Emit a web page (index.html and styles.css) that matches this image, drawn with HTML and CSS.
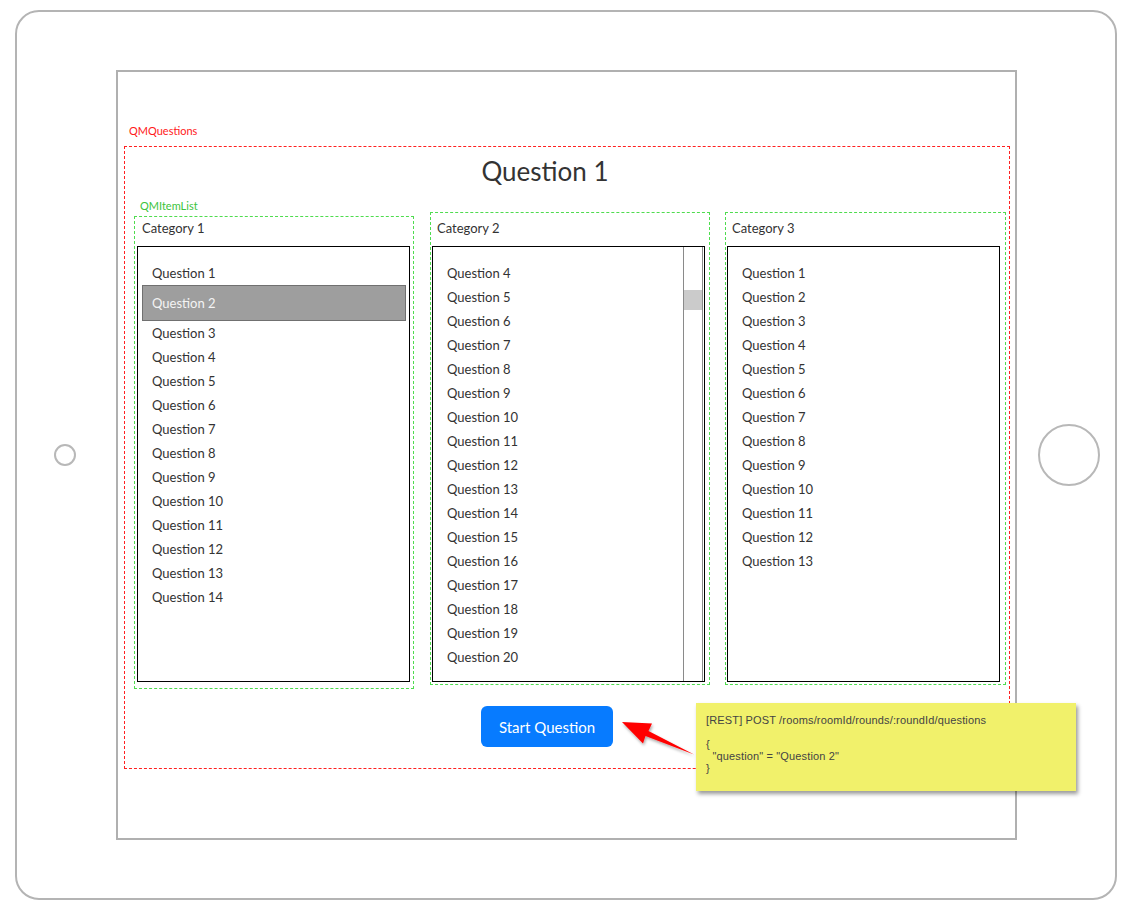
FILE: index.html
```html
<!DOCTYPE html>
<html>
<head>
<meta charset="utf-8">
<link rel="stylesheet" href="styles.css">
</head>
<body>
<div class="device">
  <div class="btn-small"></div>
  <div class="screen">
    <div class="annot annot-red">QMQuestions</div>
    <div class="qm-box">
      <h1 class="title">Question 1</h1>
      <div class="cols">
        <div class="col col-1">
          <div class="annot annot-green">QMItemList</div>
          <div class="cat">Category 1</div>
          <div class="list">
            <ul class="items">
              <li>Question 1</li>
              <li class="sel">Question 2</li>
              <li>Question 3</li>
              <li>Question 4</li>
              <li>Question 5</li>
              <li>Question 6</li>
              <li>Question 7</li>
              <li>Question 8</li>
              <li>Question 9</li>
              <li>Question 10</li>
              <li>Question 11</li>
              <li>Question 12</li>
              <li>Question 13</li>
              <li>Question 14</li>
            </ul>
          </div>
        </div>
        <div class="col col-2">
          <div class="cat">Category 2</div>
          <div class="list">
            <ul class="items">
              <li>Question 4</li>
              <li>Question 5</li>
              <li>Question 6</li>
              <li>Question 7</li>
              <li>Question 8</li>
              <li>Question 9</li>
              <li>Question 10</li>
              <li>Question 11</li>
              <li>Question 12</li>
              <li>Question 13</li>
              <li>Question 14</li>
              <li>Question 15</li>
              <li>Question 16</li>
              <li>Question 17</li>
              <li>Question 18</li>
              <li>Question 19</li>
              <li>Question 20</li>
            </ul>
            <div class="scrollbar"><div class="thumb"></div></div>
          </div>
        </div>
        <div class="col col-3">
          <div class="cat">Category 3</div>
          <div class="list">
            <ul class="items">
              <li>Question 1</li>
              <li>Question 2</li>
              <li>Question 3</li>
              <li>Question 4</li>
              <li>Question 5</li>
              <li>Question 6</li>
              <li>Question 7</li>
              <li>Question 8</li>
              <li>Question 9</li>
              <li>Question 10</li>
              <li>Question 11</li>
              <li>Question 12</li>
              <li>Question 13</li>
            </ul>
          </div>
        </div>
      </div>
      <div class="actions">
        <button class="start">Start Question</button>
      </div>
    </div>
  </div>
  <div class="btn-home"></div>
</div>

<svg class="arrow" width="90" height="50" viewBox="610 712 90 50">
  <defs>
    <filter id="sh" x="-20%" y="-30%" width="150%" height="180%">
      <feDropShadow dx="1" dy="2" stdDeviation="1.5" flood-color="#000" flood-opacity="0.35"/>
    </filter>
  </defs>
  <polygon filter="url(#sh)" fill="#ff0000" points="622,722 652,723.5 648.5,731 694,754.5 645.5,736 643,743.5"/>
</svg>

<div class="note">
  <p>[REST] POST /rooms/roomId/rounds/:roundId/questions</p>
  <p>&nbsp;</p>
  <p>{</p>
  <p>&nbsp;&nbsp;"question" = "Question 2"</p>
  <p>}</p>
</div>
</body>
</html>
```

FILE: styles.css
```css
html, body {
  margin: 0;
  padding: 0;
  background: #ffffff;
}
body {
  position: relative;
  width: 1136px;
  height: 916px;
  padding: 10px 0 0 15px;
  box-sizing: border-box;
  font-family: Lato, "Noto Sans", sans-serif;
  color: #333;
}
.device {
  width: 1102px;
  height: 890px;
  box-sizing: border-box;
  border: 2px solid #b4b4b4;
  border-radius: 24px;
  display: grid;
  grid-template-columns: 99px 901px 1fr;
  align-items: center;
}
.btn-small {
  width: 22px;
  height: 22px;
  box-sizing: border-box;
  border: 2px solid #b8b8b8;
  border-radius: 50%;
  margin-left: 37px;
}
.btn-home {
  width: 62px;
  height: 62px;
  box-sizing: border-box;
  border: 2px solid #b8b8b8;
  border-radius: 50%;
  margin-left: 21px;
}
.screen {
  height: 770px;
  box-sizing: border-box;
  border: 2px solid #b0b0b0;
  padding: 52px 5px 0 6px;
}
.annot {
  font-size: 11px;
  line-height: 14px;
  height: 14px;
}
.annot-red {
  color: #ff1a1a;
  margin-left: 5px;
  margin-bottom: 8px;
}
.annot-green {
  color: #3cc43c;
  position: absolute;
  top: -18px;
  left: 5px;
}
.qm-box {
  width: 886px;
  box-sizing: border-box;
  border: 1px dashed #ff2020;
  padding: 8px 3px 21px 9px;
}
.title {
  margin: 0;
  padding-right: 50px;
  text-align: center;
  font-size: 26px;
  line-height: 32px;
  font-weight: normal;
  color: #333;
}
.cols {
  display: flex;
  align-items: flex-start;
  margin-top: 25px;
}
.col {
  position: relative;
  box-sizing: border-box;
  border: 1px dashed #4fdc4f;
}
.col-1 {
  width: 280px;
  margin-top: 4px;
  padding: 3px 3px 6px 2px;
}
.col-2 {
  width: 280px;
  margin-left: 16px;
  padding: 7px 4px 2px 1px;
}
.col-3 {
  width: 281px;
  margin-left: 15px;
  padding: 7px 5px 2px 1px;
}
.cat {
  font-size: 13px;
  line-height: 16px;
  margin-left: 5px;
  margin-bottom: 10px;
  color: #333;
}
.list {
  width: 273px;
  height: 436px;
  box-sizing: border-box;
  border: 1px solid #000;
  display: flex;
}
.items {
  list-style: none;
  margin: 0;
  padding: 14px 0 0 0;
  flex: 1;
}
.items li {
  font-size: 13px;
  line-height: 24px;
  height: 24px;
  padding-left: 14px;
  color: #333;
}
.items li.sel {
  height: 36px;
  line-height: 34px;
  box-sizing: border-box;
  margin: 0 3px 0 4px;
  padding-left: 9px;
  background: #9e9e9e;
  border: 1px solid #707070;
  color: #f4f4f4;
}
.scrollbar {
  width: 20px;
  box-sizing: border-box;
  border-left: 1px solid #8a8a8a;
  border-right: 1px solid #8a8a8a;
  margin-right: 1px;
}
.thumb {
  margin-top: 43px;
  height: 20px;
  background: #cbcbcb;
}
.actions {
  display: flex;
  justify-content: center;
  padding-right: 46px;
  margin-top: 17px;
}
.start {
  width: 132px;
  height: 41px;
  border: none;
  border-radius: 6px;
  background: #077bff;
  color: #fff;
  font-family: Lato, "Noto Sans", sans-serif;
  font-size: 15px;
  padding: 0;
}
.arrow {
  position: absolute;
  left: 610px;
  top: 712px;
}
.note {
  position: absolute;
  left: 696px;
  top: 703px;
  width: 380px;
  height: 88px;
  box-sizing: border-box;
  background: #f1f16b;
  box-shadow: 2px 3px 4px rgba(0, 0, 0, 0.4);
  padding: 11px 0 0 10px;
  font-family: "Liberation Sans", Arial, sans-serif;
  font-size: 11px;
  letter-spacing: 0.15px;
  color: #444;
}
.note p {
  margin: 0;
  line-height: 12px;
  white-space: pre;
}
```
